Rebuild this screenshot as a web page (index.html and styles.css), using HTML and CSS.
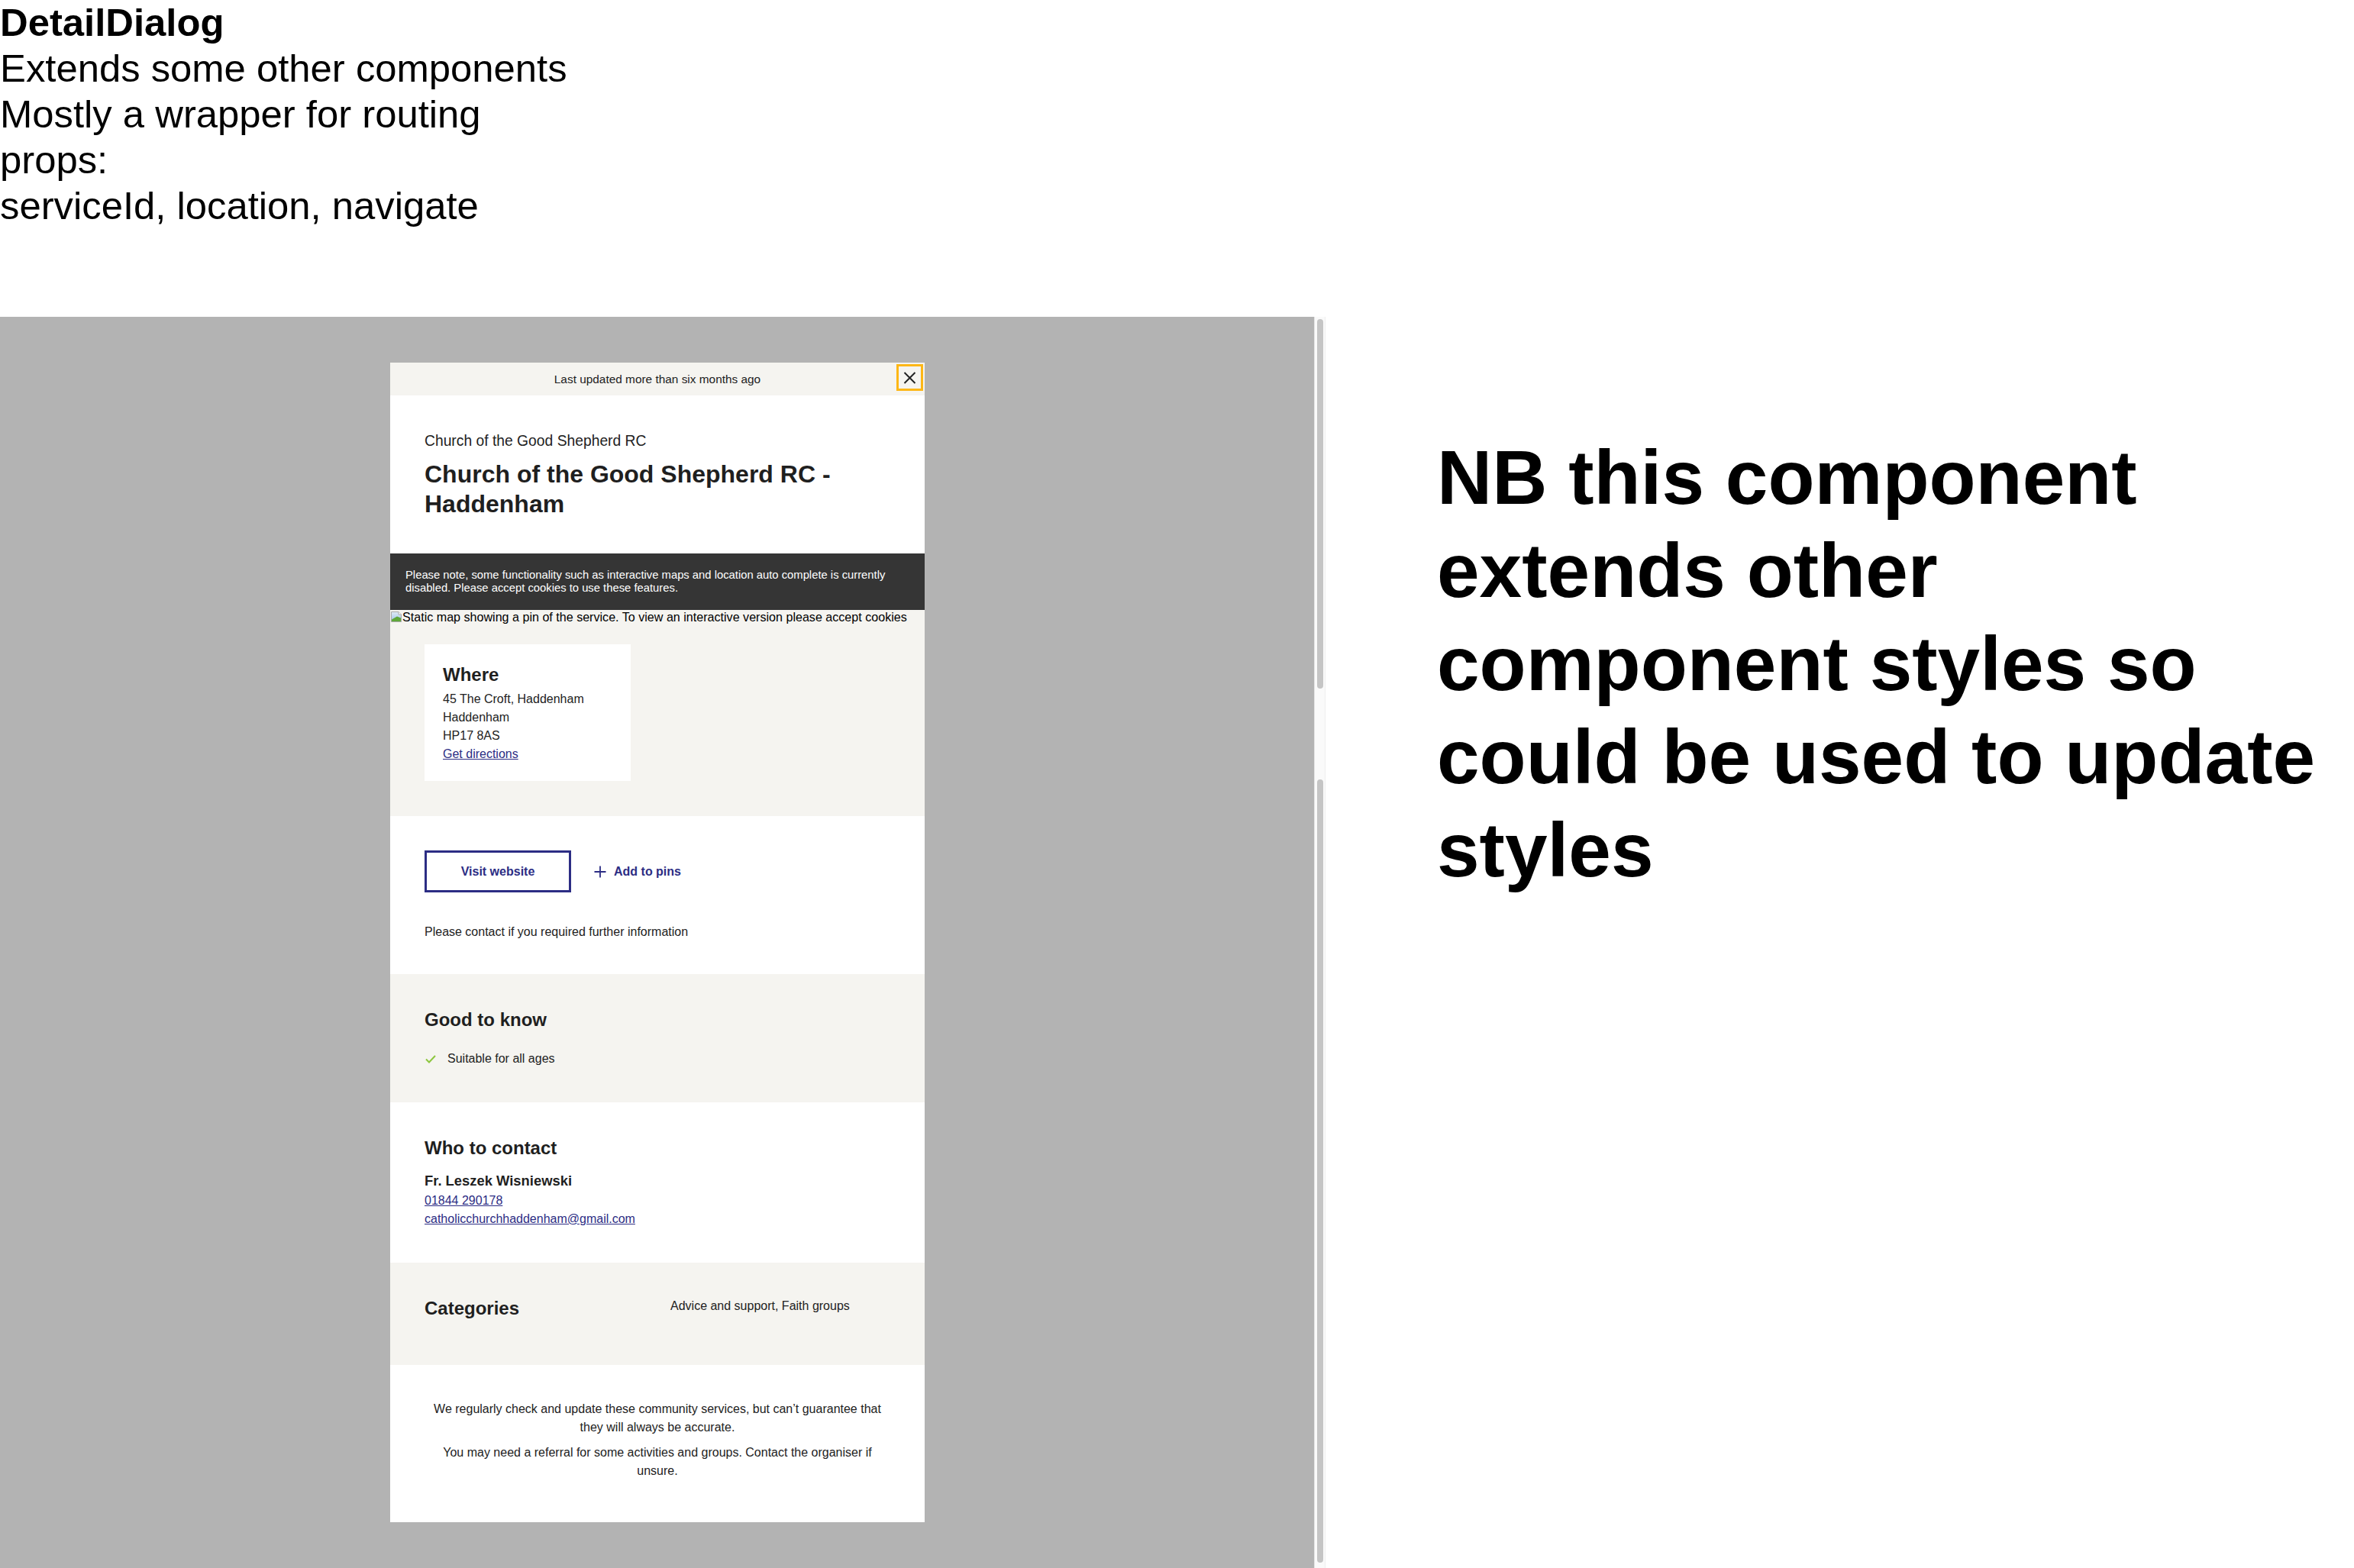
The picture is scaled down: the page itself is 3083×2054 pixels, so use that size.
FILE: index.html
```html
<!DOCTYPE html>
<html lang="en">
<head>
<meta charset="utf-8">
<title>DetailDialog</title>
<link rel="stylesheet" href="styles.css">
</head>
<body>
<header class="notes">
  <strong class="notes-title">DetailDialog</strong>
  <p class="notes-line">Extends some other components</p>
  <p class="notes-line">Mostly a wrapper for routing props:</p>
  <p class="notes-line">serviceId, location, navigate</p>
</header>

<div class="stage">
  <div class="canvas">
    <article class="dialog">
      <div class="dialog-top">
        <p class="updated">Last updated more than six months ago</p>
        <button class="close" type="button" aria-label="Close">
          <svg width="17" height="16" viewBox="0 0 17 16" aria-hidden="true"><path d="M1.5 1 L15.5 15 M15.5 1 L1.5 15" stroke="#222" stroke-width="2" fill="none"/></svg>
        </button>
      </div>

      <section class="intro">
        <p class="org">Church of the Good Shepherd RC</p>
        <h1 class="title">Church of the Good Shepherd RC - Haddenham</h1>
      </section>

      <div class="cookie-note">Please note, some functionality such as interactive maps and location auto complete is currently disabled. Please accept cookies to use these features.</div>

      <section class="where">
        <div class="map-alt">
          <svg class="broken-img" width="16" height="16" viewBox="0 0 16 16" aria-hidden="true">
            <defs><linearGradient id="sky" x1="0" y1="0" x2="0" y2="1"><stop offset="0" stop-color="#dfeaf6"/><stop offset="1" stop-color="#9fc2e6"/></linearGradient></defs>
            <path d="M1.5 1.5 H11 L14.5 5 V14.5 H1.5 Z" fill="url(#sky)" stroke="#a9a9a9"/>
            <path d="M11 1.5 V5 H14.5" fill="#fff" stroke="#a9a9a9"/>
            <path d="M2 14 V11.5 L9 7.5 L14 9.5 V14 Z" fill="#5fa83a"/>
          </svg><span>Static map showing a pin of the service. To view an interactive version please accept cookies</span>
        </div>
        <div class="where-body">
          <div class="where-card">
            <h2 class="card-heading">Where</h2>
            <p class="address">45 The Croft, Haddenham<br>Haddenham<br>HP17 8AS<br><a class="link" href="#">Get directions</a></p>
          </div>
        </div>
      </section>

      <section class="panel panel-actions">
        <div class="actions">
          <a class="btn-outline" href="#">Visit website</a>
          <button class="pin-btn" type="button">
            <svg width="16" height="16" viewBox="0 0 16 16" aria-hidden="true"><path d="M8 0.5 V15.5 M0.5 8 H15.5" stroke="#2c2d84" stroke-width="1.8" fill="none"/></svg>
            <span>Add to pins</span>
          </button>
        </div>
        <p class="contact-note">Please contact if you required further information</p>
      </section>

      <section class="panel panel-alt">
        <h2 class="section-heading">Good to know</h2>
        <ul class="features">
          <li class="feature">
            <svg width="14" height="11" viewBox="0 0 14 11" aria-hidden="true"><path d="M1 5.5 L5 9.5 L13 1" stroke="#8dc63f" stroke-width="2" fill="none"/></svg>
            <span>Suitable for all ages</span>
          </li>
        </ul>
      </section>

      <section class="panel">
        <h2 class="section-heading">Who to contact</h2>
        <p class="contact-name">Fr. Leszek Wisniewski</p>
        <a class="link contact-link" href="#">01844 290178</a>
        <a class="link contact-link" href="#">catholicchurchhaddenham@gmail.com</a>
      </section>

      <section class="panel panel-alt panel-categories">
        <h2 class="section-heading">Categories</h2>
        <p class="categories">Advice and support, Faith groups</p>
      </section>

      <section class="panel panel-footer">
        <p class="disclaimer">We regularly check and update these community services, but can’t guarantee that they will always be accurate.</p>
        <p class="disclaimer">You may need a referral for some activities and groups. Contact the organiser if unsure.</p>
      </section>
    </article>
  </div>

  <div class="scrollbar" aria-hidden="true">
    <div class="thumb thumb-top"></div>
    <div class="thumb thumb-bottom"></div>
  </div>

  <aside class="aside">NB this component extends other component styles so could be used to update styles</aside>
</div>
</body>
</html>
```

FILE: styles.css
```css
html, body {
  margin: 0;
  padding: 0;
}

body {
  font-family: "Liberation Sans", Arial, Helvetica, sans-serif;
  color: #000;
  background: #fff;
  overflow: hidden;
}

/* ---------- notes ---------- */
.notes {
  width: 760px;
  font-size: 50.8px;
  line-height: 60px;
}

.notes-title {
  display: block;
  font-weight: 700;
}

.notes-line {
  margin: 0;
}

/* ---------- stage ---------- */
.stage {
  display: flex;
  margin-top: 115px;
  height: 1639px;
}

.canvas {
  width: 1721px;
  flex: 0 0 1721px;
  box-sizing: border-box;
  background: #b3b3b3;
  padding: 60px 0 0 511px;
  overflow: hidden;
}

.scrollbar {
  flex: 0 0 15px;
  box-sizing: border-box;
  background: #fafafa;
  border-left: 1px solid #e4e4e4;
  border-right: 1px solid #efefef;
  display: flex;
  flex-direction: column;
  padding: 3px 0 0 3px;
}

.thumb {
  width: 8px;
  background: #c5c5c5;
  border-radius: 4px;
}

.thumb-top {
  height: 484px;
}

.thumb-bottom {
  margin-top: 119px;
  height: 1026px;
}

.aside {
  flex: 1;
  padding: 149px 0 0 146px;
  font-size: 100px;
  line-height: 122px;
  font-weight: 700;
  color: #000;
}

/* ---------- dialog ---------- */
.dialog {
  width: 700px;
  background: #fff;
  color: #222;
  font-size: 16px;
  line-height: 24px;
}

.dialog-top {
  position: relative;
  height: 43px;
  background: #f5f4f0;
  display: flex;
  align-items: center;
  justify-content: center;
}

.updated {
  margin: 0;
  font-size: 15.4px;
  line-height: 18px;
  color: #222;
}

.close {
  position: absolute;
  top: 2px;
  right: 2px;
  width: 35px;
  height: 35px;
  box-sizing: border-box;
  border: 3px solid #fdb716;
  background: transparent;
  padding: 0;
  display: flex;
  align-items: center;
  justify-content: center;
  cursor: pointer;
}

.close svg {
  display: block;
}

.intro {
  padding: 48px 45px 45px;
}

.org {
  margin: 0 0 13px;
  font-size: 19.3px;
  line-height: 23px;
  color: #222;
}

.title {
  margin: 0;
  font-size: 32px;
  line-height: 39px;
  font-weight: 700;
  color: #1f1f1f;
}

.cookie-note {
  background: #353535;
  color: #fff;
  font-size: 14.8px;
  line-height: 17px;
  padding: 20px;
}

.where {
  background: #f5f4f0;
}

.map-alt {
  display: flex;
  align-items: center;
  height: 18px;
  font-size: 16.1px;
  line-height: 18px;
  color: #000;
  white-space: nowrap;
}

.broken-img {
  flex: 0 0 16px;
  display: block;
}

.where-body {
  padding: 27px 45px 46px;
}

.where-card {
  width: 270px;
  box-sizing: border-box;
  background: #fff;
  padding: 25px 24px 23px;
}

.card-heading,
.section-heading {
  margin: 0;
  font-size: 24px;
  line-height: 29px;
  font-weight: 700;
  color: #1f1f1f;
}

.card-heading {
  margin-bottom: 6px;
}

.address {
  margin: 0;
}

.link {
  color: #2c2d84;
  text-decoration: underline;
}

.panel {
  padding: 45px;
}

.panel-alt {
  background: #f5f4f0;
}

.panel-actions {
  padding-bottom: 43px;
}

.actions {
  display: flex;
  align-items: center;
  gap: 30px;
}

.btn-outline {
  display: flex;
  align-items: center;
  justify-content: center;
  width: 192px;
  height: 55px;
  box-sizing: border-box;
  border: 3px solid #2c2d84;
  color: #2c2d84;
  font-weight: 700;
  font-size: 16px;
  text-decoration: none;
}

.pin-btn {
  display: flex;
  align-items: center;
  gap: 10px;
  border: 0;
  background: transparent;
  padding: 0;
  font-family: inherit;
  font-size: 16px;
  font-weight: 700;
  color: #2c2d84;
  cursor: pointer;
}

.pin-btn svg {
  display: block;
}

.contact-note {
  margin: 40px 0 0;
}

.features {
  list-style: none;
  margin: 25px 0 0;
  padding: 0;
}

.feature {
  display: flex;
  align-items: center;
  gap: 15px;
  padding-left: 1px;
}

.feature svg {
  display: block;
  flex: 0 0 14px;
}

.contact-name {
  margin: 18px 0 3px;
  font-size: 18.4px;
  line-height: 22px;
  font-weight: 700;
  color: #1f1f1f;
}

.contact-link {
  display: block;
  width: max-content;
}

.panel-categories {
  display: grid;
  grid-template-columns: 322px 1fr;
  align-items: start;
  padding-bottom: 60px;
}

.categories {
  margin: 0;
}

.panel-footer {
  padding: 46px 45px 55px;
  text-align: center;
}

.disclaimer {
  margin: 0;
}

.disclaimer + .disclaimer {
  margin-top: 9px;
}
```
